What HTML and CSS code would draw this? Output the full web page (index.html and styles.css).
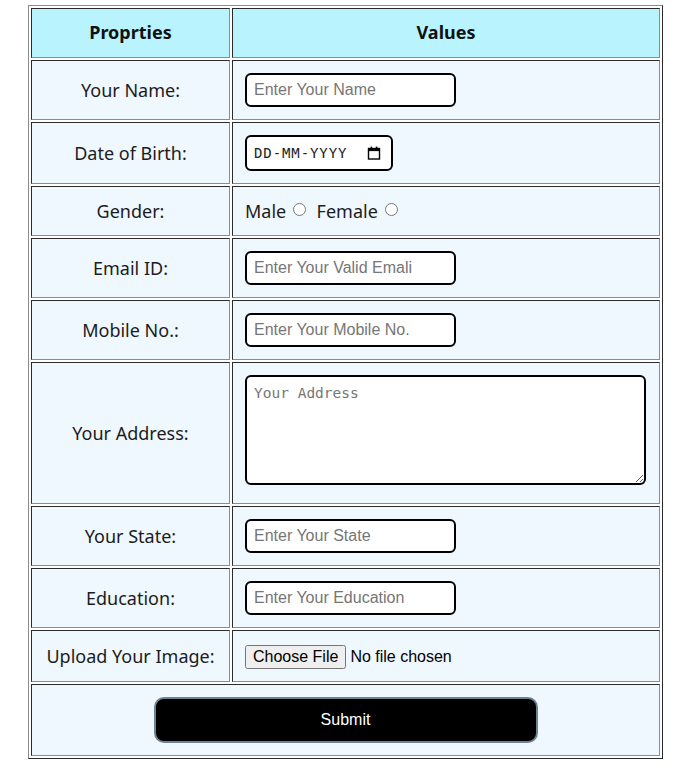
FILE: index.html
```html
<!DOCTYPE html>
<html lang="en">
<head>
<meta charset="utf-8">
<title>Form</title>
<link rel="stylesheet" href="styles.css">
</head>
<body>
<form class="page">
  <table class="form-table">
    <colgroup>
      <col class="col-prop">
      <col class="col-val">
    </colgroup>
    <tr class="head-row">
      <th>Proprties</th>
      <th>Values</th>
    </tr>
    <tr>
      <td class="label">Your Name:</td>
      <td class="value"><input class="field" type="text" placeholder="Enter Your Name"></td>
    </tr>
    <tr>
      <td class="label">Date of Birth:</td>
      <td class="value date-cell">
        <div class="date-field">
          <span class="date-text">DD-MM-YYYY</span>
          <svg class="cal-icon" width="14" height="14" viewBox="0 0 14 14" aria-hidden="true">
            <rect x="1.5" y="2.5" width="11" height="10.5" fill="none" stroke="#000" stroke-width="1.4"/>
            <rect x="1.5" y="2.5" width="11" height="2.6" fill="#000"/>
            <rect x="3.6" y="0.6" width="1.6" height="2.6" fill="#000"/>
            <rect x="8.8" y="0.6" width="1.6" height="2.6" fill="#000"/>
          </svg>
        </div>
      </td>
    </tr>
    <tr>
      <td class="label">Gender:</td>
      <td class="value gender">
        <label class="radio-opt">Male <input type="radio" name="g"></label>
        <label class="radio-opt">Female <input type="radio" name="g"></label>
      </td>
    </tr>
    <tr>
      <td class="label">Email ID:</td>
      <td class="value"><input class="field" type="email" placeholder="Enter Your Valid Emali"></td>
    </tr>
    <tr>
      <td class="label">Mobile No.:</td>
      <td class="value"><input class="field" type="text" placeholder="Enter Your Mobile No."></td>
    </tr>
    <tr>
      <td class="label">Your Address:</td>
      <td class="value"><textarea class="address" placeholder="Your Address"></textarea></td>
    </tr>
    <tr>
      <td class="label">Your State:</td>
      <td class="value"><input class="field" type="text" placeholder="Enter Your State"></td>
    </tr>
    <tr>
      <td class="label">Education:</td>
      <td class="value"><input class="field" type="text" placeholder="Enter Your Education"></td>
    </tr>
    <tr class="upload-row">
      <td class="label">Upload Your Image:</td>
      <td class="value"><input class="file" type="file"></td>
    </tr>
    <tr>
      <td class="submit-cell" colspan="2"><button class="submit" type="button">Submit</button></td>
    </tr>
  </table>
</form>
</body>
</html>
```

FILE: styles.css
```css
html, body {
  margin: 0;
  padding: 0;
  background: #ffffff;
}

.page {
  padding: 5px 0 0 28px;
  margin: 0;
}

.form-table {
  width: 635px;
  table-layout: fixed;
  border-collapse: separate;
  border-spacing: 2px;
  border: 1px solid;
  border-color: #8c8c8c #2b2b2b #2b2b2b #8c8c8c;
  font-family: "Noto Sans", "Open Sans", sans-serif;
  font-size: 18px;
  line-height: 24px;
  color: #1c1c1c;
}

.col-prop { width: 199px; }

.form-table th,
.form-table td {
  border: 1px solid;
  border-color: #2b2b2b #8c8c8c #8c8c8c #2b2b2b;
  background: #eff7ff;
  padding: 12px;
}

.form-table th {
  background: #b9f4fe;
  font-weight: 700;
  color: #111;
  text-align: center;
  padding: 11px 12px 13px;
}

.label {
  text-align: center;
}

.value {
  text-align: left;
}

.field {
  display: block;
  box-sizing: border-box;
  width: 211px;
  height: 34px;
  margin: 0;
  padding: 0 7px;
  border: 2px solid #000;
  border-radius: 6px;
  background: #fff;
  font-family: "Liberation Sans", Arial, sans-serif;
  font-size: 16px;
  color: #000;
}

.field::placeholder {
  color: #767676;
}

.date-cell {
  padding-bottom: 13px;
}

.date-field {
  box-sizing: border-box;
  width: 148px;
  height: 36px;
  border: 2px solid #000;
  border-radius: 6px;
  background: #fff;
  display: flex;
  align-items: center;
  justify-content: space-between;
  padding: 0 10px 0 7px;
}

.date-text {
  font-family: "DejaVu Sans Mono", monospace;
  font-size: 14px;
  letter-spacing: 0.9px;
  color: #222;
}

.cal-icon {
  display: block;
}

.gender {
  padding-left: 13px;
}

.radio-opt {
  margin-right: 6px;
}

.radio-opt input {
  margin: 0 0 0 2px;
  width: 13px;
  height: 13px;
  vertical-align: 2px;
}

.address {
  display: block;
  box-sizing: border-box;
  width: 401px;
  height: 110px;
  margin: 0 0 6px 0;
  padding: 8px 7px;
  border: 2px solid #000;
  border-radius: 6px;
  background: #fff;
  font-family: "DejaVu Sans Mono", "Liberation Mono", monospace;
  font-size: 14.5px;
  resize: both;
}

.address::placeholder {
  color: #767676;
}

.upload-row td {
  padding-top: 12px;
  padding-bottom: 12px;
}

.file {
  font-family: "Liberation Sans", Arial, sans-serif;
  font-size: 16px;
  color: #000;
  margin: 0;
  vertical-align: middle;
}

.submit-cell {
  text-align: center;
  padding: 12px 0 14px;
}

.submit {
  display: block;
  margin: 0 auto;
  box-sizing: border-box;
  width: 384px;
  height: 46px;
  background: #000;
  color: #fff;
  border: 2px solid #6f8194;
  border-radius: 10px;
  font-family: "Liberation Sans", Arial, sans-serif;
  font-size: 16px;
}
```
